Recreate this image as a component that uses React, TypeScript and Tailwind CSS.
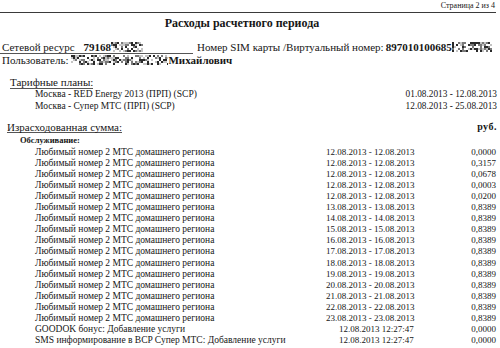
import React from "react";

function Noise({ w, h, seed }: { w: number; h: number; seed: number }) {
  let s = seed;
  const rnd = () => {
    s = (s * 16807) % 2147483647;
    return s / 2147483647;
  };
  const cells: React.ReactNode[] = [];
  const c = 2;
  for (let y = 0; y < h; y += c) {
    for (let x = 0; x < w; x += c) {
      const r = rnd();
      let fill: string | null = null;
      if (r < 0.22) fill = "#2a2a2a";
      else if (r < 0.42) fill = "#7a7a7a";
      else if (r < 0.6) fill = "#c4c4c4";
      if (fill) cells.push(<rect key={`${x}-${y}`} x={x} y={y} width={c} height={c} fill={fill} />);
    }
  }
  return (
    <svg width={w} height={h} className="inline-block shrink-0">
      {cells}
    </svg>
  );
}

const rows: [string, string, string][] = [
  ["Любимый номер 2 МТС домашнего региона", "12.08.2013 - 12.08.2013", "0,0000"],
  ["Любимый номер 2 МТС домашнего региона", "12.08.2013 - 12.08.2013", "0,3157"],
  ["Любимый номер 2 МТС домашнего региона", "12.08.2013 - 12.08.2013", "0,0678"],
  ["Любимый номер 2 МТС домашнего региона", "12.08.2013 - 12.08.2013", "0,0003"],
  ["Любимый номер 2 МТС домашнего региона", "12.08.2013 - 12.08.2013", "0,0200"],
  ["Любимый номер 2 МТС домашнего региона", "13.08.2013 - 13.08.2013", "0,8389"],
  ["Любимый номер 2 МТС домашнего региона", "14.08.2013 - 14.08.2013", "0,8389"],
  ["Любимый номер 2 МТС домашнего региона", "15.08.2013 - 15.08.2013", "0,8389"],
  ["Любимый номер 2 МТС домашнего региона", "16.08.2013 - 16.08.2013", "0,8389"],
  ["Любимый номер 2 МТС домашнего региона", "17.08.2013 - 17.08.2013", "0,8389"],
  ["Любимый номер 2 МТС домашнего региона", "18.08.2013 - 18.08.2013", "0,8389"],
  ["Любимый номер 2 МТС домашнего региона", "19.08.2013 - 19.08.2013", "0,8389"],
  ["Любимый номер 2 МТС домашнего региона", "20.08.2013 - 20.08.2013", "0,8389"],
  ["Любимый номер 2 МТС домашнего региона", "21.08.2013 - 21.08.2013", "0,8389"],
  ["Любимый номер 2 МТС домашнего региона", "22.08.2013 - 22.08.2013", "0,8389"],
  ["Любимый номер 2 МТС домашнего региона", "23.08.2013 - 23.08.2013", "0,8389"],
];

export default function App() {
  return (
    <div
      className="w-[500px] h-[348px] overflow-hidden bg-white text-[#161616]"
      style={{ fontFamily: '"Liberation Serif", "Times New Roman", serif' }}
    >
      <div className="w-[496px] h-[13px] border-b border-[#3a3a3a] flex justify-end items-center text-[8px] leading-[12px]">
        <span className="pr-[1px]">Страница 2 из 4</span>
      </div>
      <div className="h-[20px] leading-[20px] text-[12px] font-bold text-center pr-[16px]">
        Расходы расчетного периода
      </div>

      <div className="mt-[8px] flex text-[11px] leading-[12px]">
        <div className="w-[193px] border-b border-[#555] flex items-center pl-[2px] h-[13px]">
          <span>Сетевой ресурс</span>
          <span className="font-bold ml-[9px]">79168</span>
          <Noise w={32} h={10} seed={11} />
        </div>
        <div className="flex items-center pl-[4px] h-[12px]">
          <span>Номер SIM карты /Виртуальный номер:</span>
          <span className="font-bold ml-[2px]">897010100685</span>
          <Noise w={40} h={10} seed={29} />
        </div>
      </div>
      <div className="flex items-center pl-[2px] h-[12px] text-[11px] leading-[12px]">
        <span>Пользователь:</span>
        <span className="ml-[3px] flex">
          <Noise w={97} h={10} seed={47} />
        </span>
        <span className="font-bold">Михайлович</span>
      </div>

      <div className="mt-[10px] ml-[10px] text-[11px] leading-[12px] h-[13px]">
        <span className="border-b border-[#555] inline-block h-[13px]">Тарифные планы:</span>
      </div>
      <div className="leading-[11.8px]">
        <div className="flex justify-between items-center pl-[35px] pr-[3px]">
          <span className="text-[9.5px]">Москва - RED Energy 2013 (ПРП) (SCP)</span>
          <span className="text-[9.3px]">01.08.2013 - 12.08.2013</span>
        </div>
        <div className="flex justify-between items-center pl-[35px] pr-[3px]">
          <span className="text-[9.5px]">Москва - Супер МТС (ПРП) (SCP)</span>
          <span className="text-[9.3px]">12.08.2013 - 25.08.2013</span>
        </div>
      </div>

      <div className="mt-[8px] flex justify-between items-center pl-[7px] pr-[3px] h-[12px]">
        <span className="text-[11px] leading-[12px] border-b border-[#555] inline-block h-[12px]">
          Израсходованная сумма:
        </span>
        <span className="text-[10px] tracking-[0.5px] font-bold">руб.</span>
      </div>
      <div className="pl-[20px] text-[8.5px] font-bold leading-[13px] h-[13px] mt-[1px]">
        Обслуживание:
      </div>

      <div className="text-[9px] leading-[11.1px]">
        {rows.map((r, i) => (
          <div key={i} className="flex items-center">
            <span className="w-[326px] pl-[35px] shrink-0 whitespace-nowrap text-[9.5px]">{r[0]}</span>
            <span className="w-[91px] shrink-0 whitespace-nowrap">{r[1]}</span>
            <span className="flex-1 text-right pr-[4px]">{r[2]}</span>
          </div>
        ))}
        <div className="flex items-center">
          <span className="w-[326px] pl-[35px] shrink-0 whitespace-nowrap text-[9.5px]">
            GOODOK бонус: Добавление услуги
          </span>
          <span className="w-[91px] shrink-0 whitespace-nowrap pl-[13px]">12.08.2013 12:27:47</span>
          <span className="flex-1 text-right pr-[4px]">0,0000</span>
        </div>
        <div className="flex items-center">
          <span className="w-[326px] pl-[35px] shrink-0 whitespace-nowrap text-[9.5px]">
            SMS информирование в BCP Супер МТС: Добавление услуги
          </span>
          <span className="w-[91px] shrink-0 whitespace-nowrap pl-[13px]">12.08.2013 12:27:47</span>
          <span className="flex-1 text-right pr-[4px]">0,0000</span>
        </div>
      </div>
    </div>
  );
}
